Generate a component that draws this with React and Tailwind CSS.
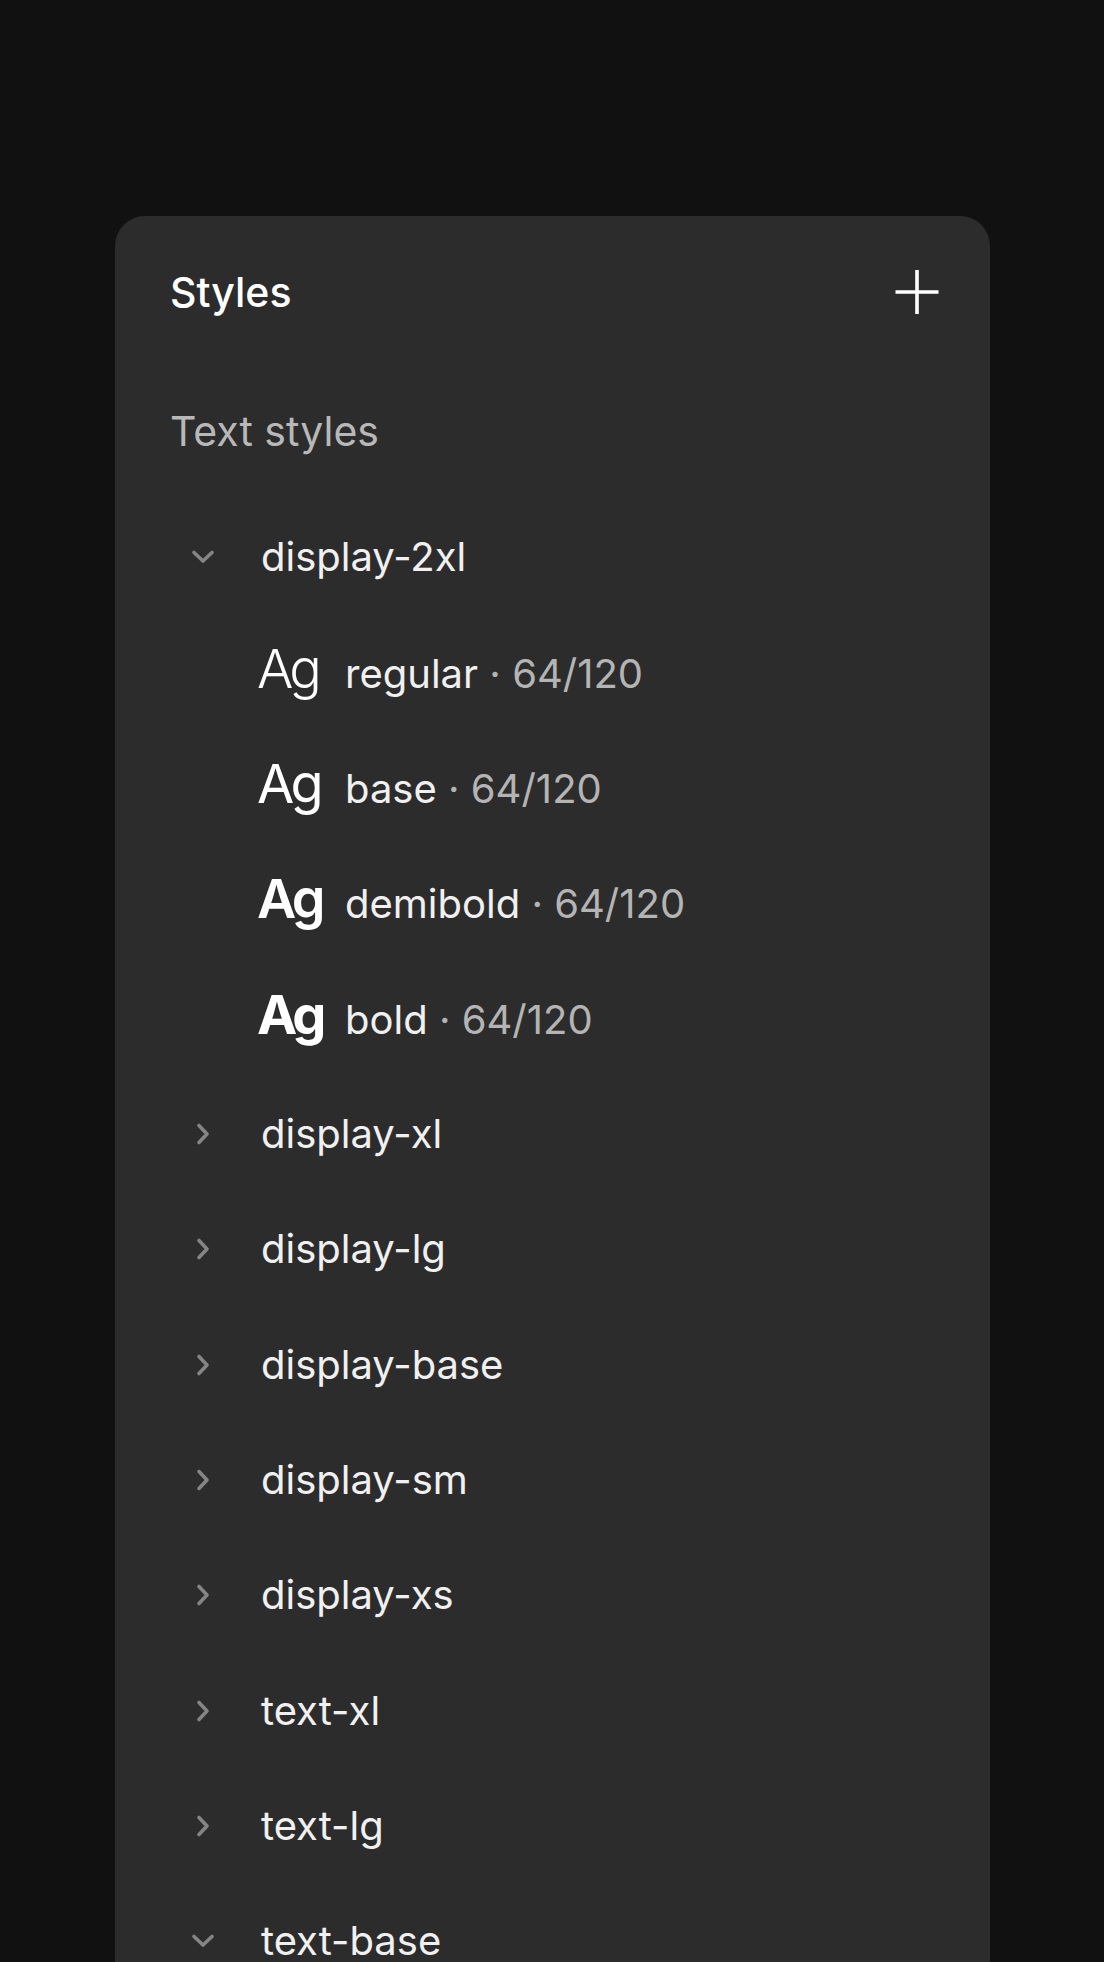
import React from "react";

const groups = [
    {
        name: "display-2xl",
        open: true,
        styles: [
            { weight: "regular", agClass: "font-light" },
            { weight: "base", agClass: "font-normal" },
            { weight: "demibold", agClass: "font-semibold" },
            { weight: "bold", agClass: "font-bold" },
        ],
    },
    { name: "display-xl" },
    { name: "display-lg" },
    { name: "display-base" },
    { name: "display-sm" },
    { name: "display-xs" },
    { name: "text-xl" },
    { name: "text-lg" },
    { name: "text-base", open: true },
];

function Chevron({ open }) {
    return (
        <svg width="24" height="24" viewBox="0 0 24 24" fill="none">
            <path
                d={open ? "M3 7.5 L12 16 L21 7.5" : "M8 3.5 L16 12 L8 20.5"}
                stroke="#858585"
                strokeWidth="3.6"
                strokeLinecap="round"
                strokeLinejoin="round"
            />
        </svg>
    );
}

function PlusIcon() {
    return (
        <svg width="44" height="46" viewBox="0 0 44 46" fill="none">
            <path d="M22 1 V45 M0.5 23 H43.5" stroke="#ffffff" strokeWidth="3.6" />
        </svg>
    );
}

function GroupRow({ group }) {
    return (
        <div className="flex items-center h-[115.35px]">
            <div className="flex justify-center w-[66px] flex-shrink-0">
                <Chevron open={group.open} />
            </div>
            <div className="ml-[25px] text-[40px] text-[#f0f0f0] whitespace-nowrap">
                {group.name}
            </div>
        </div>
    );
}

function StyleRow({ item }) {
    return (
        <div className="flex items-center h-[115.35px] pl-[87px]">
            <div className="flex items-baseline whitespace-nowrap">
                <div
                    className={`w-[88px] flex-shrink-0 text-[54px] leading-none tracking-[-0.07em] text-white ${item.agClass}`}
                >
                    Ag
                </div>
                <div className="text-[40px] text-[#f0f0f0]">
                    {item.weight}
                    <span className="text-[#b4b4b4]"> · 64/120</span>
                </div>
            </div>
        </div>
    );
}

export default function App() {
    return (
        <div className="h-[1962px] bg-[#111111] pt-[216px] pl-[115px] font-['Inter','Noto_Sans',sans-serif] overflow-hidden">
            <div className="w-[875px] min-h-[1746px] bg-[#2c2c2c] rounded-t-[30px] pt-[36px] pl-[55px] pr-[51px]">
                <div className="flex items-center justify-between h-[80px]">
                    <div className="text-[41px] leading-[80px] font-medium text-white">
                        Styles
                    </div>
                    <PlusIcon />
                </div>

                <div className="mt-[58.7px] mb-[29px] text-[41px] leading-[80px] text-[#b8b8b8]">
                    Text styles
                </div>

                <div className="flex flex-col">
                    {groups.map((group) => (
                        <React.Fragment key={group.name}>
                            <GroupRow group={group} />
                            {group.open &&
                                group.styles &&
                                group.styles.map((item) => (
                                    <StyleRow key={item.weight} item={item} />
                                ))}
                        </React.Fragment>
                    ))}
                </div>
            </div>
        </div>
    );
}
